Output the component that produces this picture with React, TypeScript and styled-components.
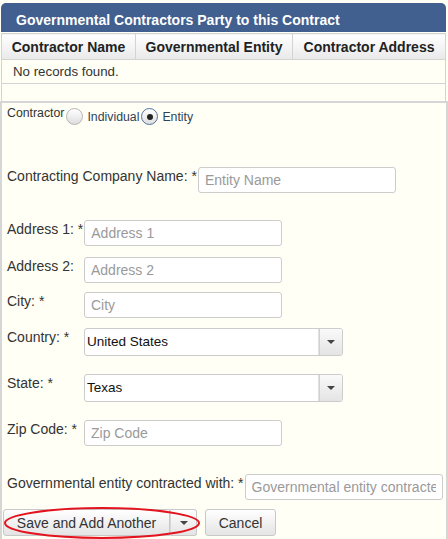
import React from "react";
import styled, { createGlobalStyle } from "styled-components";

const GlobalStyle = createGlobalStyle`
  html, body {
    margin: 0;
    padding: 0;
    background: #fffff5;
  }
  body {
    font-family: "Liberation Sans", Arial, sans-serif;
    font-size: 14px;
    color: #333;
  }
`;

const Page = styled.div`
  width: 448px;
  height: 539px;
  overflow: hidden;
  background: #fffff5;
`;

const Panel = styled.section`
  margin: 3px 2px 0 1px;
`;

const PanelHeader = styled.div`
  height: 25px;
  padding: 4px 0 0 15px;
  line-height: 26px;
  background: #41608f;
  color: #fff;
  font-weight: bold;
  font-size: 14px;
  border-radius: 5px 5px 0 0;
`;

const Grid = styled.table`
  width: 100%;
  margin-top: 1px;
  border-collapse: collapse;
  table-layout: fixed;
  background: #fffff5;
`;

const Th = styled.th`
  height: 25px;
  padding: 0 3px;
  font-size: 14px;
  font-weight: bold;
  color: #222;
  text-align: center;
  white-space: nowrap;
  overflow: hidden;
  background: linear-gradient(#ffffff, #e9e9e9);
  border: 1px solid #d3d3d3;
`;

const Td = styled.td`
  height: 23px;
  padding: 0 11px;
  font-size: 13.3px;
  color: #333;
  border: 1px solid #d3d3d3;
`;

const Spacer = styled.div`
  height: 17px;
  border-left: 1px solid #d3d3d3;
  border-right: 1px solid #d3d3d3;
`;

const Form = styled.form`
  border: 2px solid #d6d6d6;
  border-bottom: none;
  padding-left: 1px;
  height: 440px;
`;

const Row = styled.div<{ $mt: number }>`
  display: flex;
  align-items: flex-start;
  margin-top: ${(p) => p.$mt}px;
`;

const Label = styled.label`
  min-width: 81px;
  box-sizing: border-box;
  padding: 1px 1px 0 4px;
  line-height: 16px;
  font-size: 14px;
  color: #333;
  white-space: nowrap;
`;

const SmallLabel = styled.span`
  padding: 2px 2px 0 4px;
  line-height: 16px;
  font-size: 12.3px;
  color: #333;
`;

const RadioGroup = styled.div`
  display: flex;
  align-items: center;
  margin-top: 5px;
`;

const RadioDot = styled.span<{ $checked?: boolean }>`
  width: 15px;
  height: 15px;
  border-radius: 50%;
  border: 1px solid ${(p) => (p.$checked ? "#54739a" : "#b5b5b5")};
  background: linear-gradient(#ffffff, #dedede);
  display: flex;
  align-items: center;
  justify-content: center;
  &::after {
    content: "";
    display: ${(p) => (p.$checked ? "block" : "none")};
    width: 6px;
    height: 6px;
    border-radius: 50%;
    background: #222;
  }
`;

const RadioText = styled.span`
  font-size: 12.3px;
  color: #2f4258;
  margin: 0 2px 0 4px;
`;

const TextInput = styled.input`
  width: 198px;
  height: 26px;
  box-sizing: border-box;
  padding: 0 6px;
  border: 1px solid #ccc;
  border-radius: 3px;
  background: #fff;
  font-family: "Liberation Sans", Arial, sans-serif;
  font-size: 14px;
  color: #333;
  &::placeholder {
    color: #9a9a9a;
  }
`;

const Select = styled.div`
  width: 259px;
  height: 28px;
  box-sizing: border-box;
  display: flex;
  border: 1px solid #ccc;
  border-radius: 3px;
  background: #fff;
  overflow: hidden;
`;

const SelectValue = styled.span`
  flex: 1;
  padding-left: 2px;
  line-height: 26px;
  font-size: 13.5px;
  color: #111;
  border-right: 1px solid #e2e2e2;
`;

const SelectToggle = styled.span`
  width: 22px;
  display: flex;
  align-items: center;
  justify-content: center;
  background: linear-gradient(#fafafa, #e4e4e4);
  border-left: 1px solid #d0d0d0;
`;

const Caret = styled.span`
  width: 0;
  height: 0;
  border-left: 4px solid transparent;
  border-right: 4px solid transparent;
  border-top: 4px solid #444;
`;

const ButtonBar = styled.div`
  display: flex;
  align-items: center;
  margin-top: 9px;
`;

const SplitGroup = styled.div`
  position: relative;
  display: flex;
`;

const Button = styled.button<{ $w: number; $side?: "left" | "right" }>`
  width: ${(p) => p.$w}px;
  height: 27px;
  padding: 0;
  display: flex;
  align-items: center;
  justify-content: center;
  font-family: "Liberation Sans", Arial, sans-serif;
  font-size: 14px;
  color: #333;
  background: linear-gradient(#ffffff, #e4e4e4);
  border: 1px solid #c8c8c8;
  border-radius: ${(p) =>
    p.$side === "left" ? "3px 0 0 3px" : p.$side === "right" ? "0 3px 3px 0" : "3px"};
  ${(p) => (p.$side === "right" ? "border-left: 1px solid #d8d8d8;" : "")}
`;

const CancelButton = styled(Button)`
  margin-left: 8px;
`;

const Annotation = styled.svg`
  position: absolute;
  left: 0;
  top: -3px;
  pointer-events: none;
`;

export default function App() {
  return (
    <Page>
      <GlobalStyle />
      <Panel>
        <PanelHeader>Governmental Contractors Party to this Contract</PanelHeader>
        <Grid>
          <colgroup>
            <col style={{ width: 134 }} />
            <col style={{ width: 157 }} />
            <col />
          </colgroup>
          <thead>
            <tr>
              <Th>Contractor Name</Th>
              <Th>Governmental Entity</Th>
              <Th>Contractor Address</Th>
            </tr>
          </thead>
          <tbody>
            <tr>
              <Td colSpan={3}>No records found.</Td>
            </tr>
          </tbody>
        </Grid>
        <Spacer />
      </Panel>

      <Form onSubmit={(e) => e.preventDefault()}>
        <Row $mt={0}>
          <SmallLabel>Contractor</SmallLabel>
          <RadioGroup>
            <RadioDot />
            <RadioText>Individual</RadioText>
            <RadioDot $checked />
            <RadioText>Entity</RadioText>
          </RadioGroup>
        </Row>

        <Row $mt={42}>
          <Label>Contracting Company Name: *</Label>
          <TextInput placeholder="Entity Name" />
        </Row>

        <Row $mt={27}>
          <Label>Address 1: *</Label>
          <TextInput placeholder="Address 1" />
        </Row>

        <Row $mt={11}>
          <Label>Address 2:</Label>
          <TextInput placeholder="Address 2" />
        </Row>

        <Row $mt={9}>
          <Label>City: *</Label>
          <TextInput placeholder="City" />
        </Row>

        <Row $mt={10}>
          <Label>Country: *</Label>
          <Select>
            <SelectValue>United States</SelectValue>
            <SelectToggle>
              <Caret />
            </SelectToggle>
          </Select>
        </Row>

        <Row $mt={18}>
          <Label>State: *</Label>
          <Select>
            <SelectValue>Texas</SelectValue>
            <SelectToggle>
              <Caret />
            </SelectToggle>
          </Select>
        </Row>

        <Row $mt={18}>
          <Label>Zip Code: *</Label>
          <TextInput placeholder="Zip Code" />
        </Row>

        <Row $mt={28}>
          <Label>Governmental entity contracted with: *</Label>
          <TextInput placeholder="Governmental entity contracted with" />
        </Row>

        <ButtonBar>
          <SplitGroup>
            <Button type="button" $w={167} $side="left">
              Save and Add Another
            </Button>
            <Button type="button" $w={27} $side="right">
              <Caret />
            </Button>
            <Annotation width="202" height="34" viewBox="0 0 202 34">
              <ellipse cx="99" cy="17" rx="97" ry="15" fill="none" stroke="#e3141e" strokeWidth="2" />
            </Annotation>
          </SplitGroup>
          <CancelButton type="button" $w={71}>
            Cancel
          </CancelButton>
        </ButtonBar>
      </Form>
    </Page>
  );
}
